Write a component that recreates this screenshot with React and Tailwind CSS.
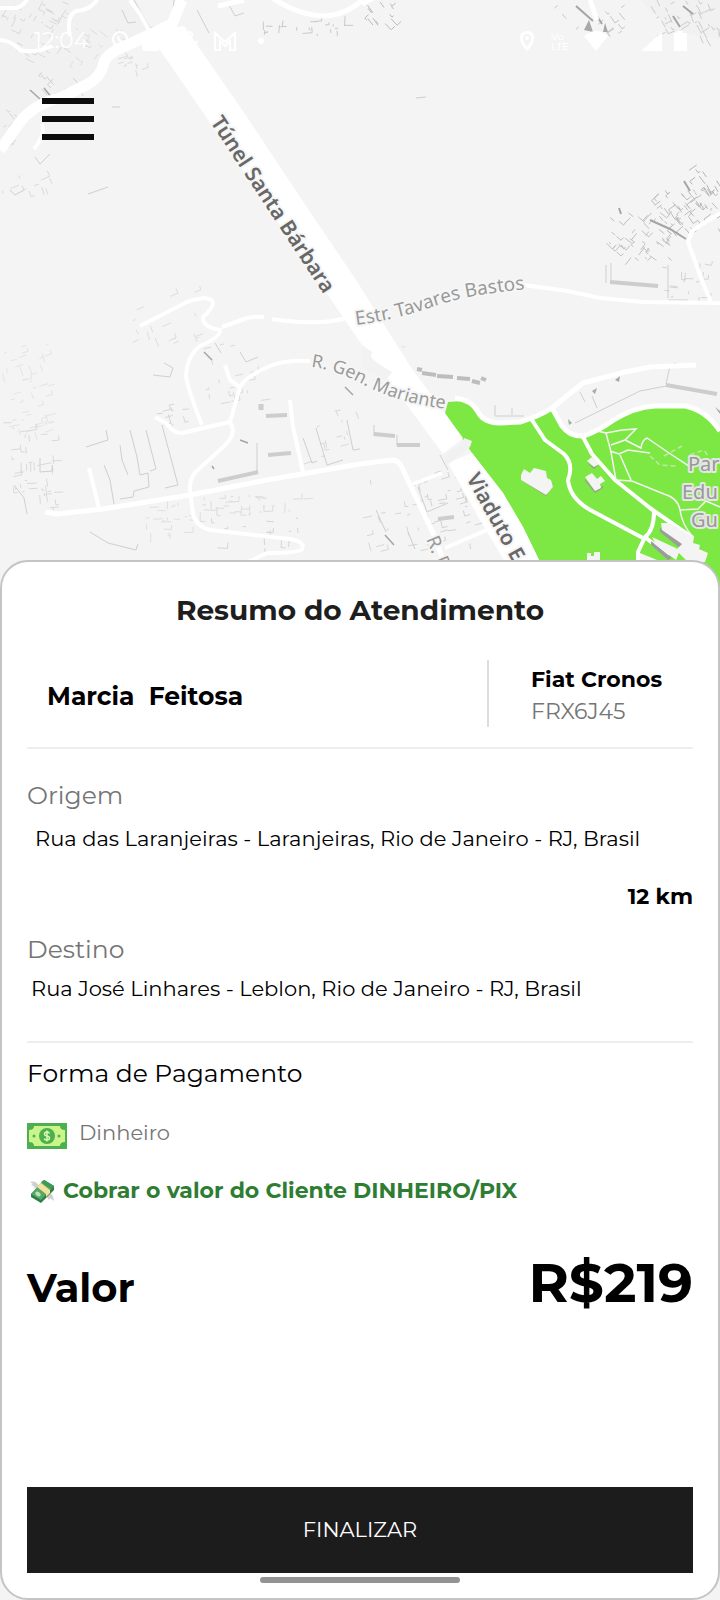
import React from "react";

// Small repeatable random generator, so the buildings stay put between renders
const random = (seed) => {
  let s = seed;
  return () => {
    s = (s * 16807) % 2147483647;
    return s / 2147483647;
  };
};

// Blocks of the map filled with building outlines
const blocks = [
  { seed: 11, x: 0, y: 0, w: 70, h: 62, n: 42, color: "#d9d9d9", tilt: 0.4 },
  { seed: 12, x: 62, y: 20, w: 60, h: 42, n: 16, color: "#dedede", tilt: 0.5 },
  { seed: 13, x: 40, y: 68, w: 40, h: 26, n: 10, color: "#cfcfcf", tilt: 0.8 },
  { seed: 14, x: 2, y: 105, w: 20, h: 45, n: 9, color: "#d6d6d6", tilt: 0.8 },
  { seed: 15, x: 116, y: 52, w: 26, h: 24, n: 11, color: "#dcdcdc", tilt: -0.4 },
  { seed: 16, x: 250, y: 16, w: 100, h: 18, n: 20, color: "#c9c9c9", tilt: -0.1 },
  { seed: 17, x: 362, y: 0, w: 34, h: 26, n: 12, color: "#b9b9b9", tilt: 0.8 },
  { seed: 18, x: 555, y: 0, w: 70, h: 34, n: 14, color: "#c6c6c6", tilt: 0.8 },
  { seed: 19, x: 650, y: 0, w: 70, h: 40, n: 42, color: "#cbcbcb", tilt: 1 },
  { seed: 20, x: 606, y: 212, w: 66, h: 46, n: 52, color: "#c0c0c0", tilt: 0.6 },
  { seed: 21, x: 656, y: 190, w: 64, h: 40, n: 52, color: "#bcbcbc", tilt: 0.8 },
  { seed: 22, x: 690, y: 164, w: 30, h: 40, n: 18, color: "#b4b4b4", tilt: 0.9 },
  { seed: 23, x: 662, y: 262, w: 54, h: 38, n: 18, color: "#d4d4d4", tilt: 0 },
  { seed: 24, x: 0, y: 345, w: 50, h: 90, n: 46, color: "#e4e4e4", tilt: -0.4 },
  { seed: 25, x: 0, y: 420, w: 56, h: 90, n: 44, color: "#dadada", tilt: -0.2 },
  { seed: 26, x: 130, y: 288, w: 66, h: 66, n: 18, color: "#dedede", tilt: -0.5 },
  { seed: 27, x: 192, y: 340, w: 74, h: 70, n: 18, color: "#dadada", tilt: -0.3 },
  { seed: 28, x: 152, y: 400, w: 40, h: 26, n: 10, color: "#d6d6d6", tilt: -0.3 },
  { seed: 29, x: 200, y: 496, w: 108, h: 18, n: 34, color: "#dddddd", tilt: -0.1 },
  { seed: 30, x: 144, y: 500, w: 46, h: 34, n: 20, color: "#e0e0e0", tilt: -0.1 },
  { seed: 31, x: 210, y: 518, w: 96, h: 38, n: 14, color: "#d6d6d6", tilt: -0.1 },
  { seed: 32, x: 310, y: 410, w: 52, h: 54, n: 14, color: "#d9d9d9", tilt: 1.2 },
  { seed: 33, x: 362, y: 480, w: 68, h: 76, n: 26, color: "#d6d6d6", tilt: -0.3 },
  { seed: 34, x: 420, y: 470, w: 56, h: 76, n: 28, color: "#d2d2d2", tilt: -0.3 },
  { seed: 35, x: 362, y: 345, w: 40, h: 34, n: 14, color: "#e2e2e2", tilt: 0.3 },
  { seed: 36, x: 0, y: 172, w: 50, h: 20, n: 10, color: "#dadada", tilt: -0.5 },
];

const scatter = ({ seed, x, y, w, h, n, tilt }) => {
  const rand = random(seed * 7919);
  let d = "";
  for (let i = 0; i < n; i++) {
    const angle = tilt + (rand() > 0.6 ? Math.PI / 2 : 0) + rand() * 0.2;
    const length = 2 + rand() * 8;
    const px = x + rand() * w;
    const py = y + rand() * h;
    const dx = Math.cos(angle) * length;
    const dy = Math.sin(angle) * length;
    d += `M${px.toFixed(1)} ${py.toFixed(1)}l${dx.toFixed(1)} ${dy.toFixed(1)}`;
    if (rand() > 0.7) {
      d += `l${(dy * 0.6).toFixed(1)} ${(-dx * 0.6).toFixed(1)}`;
    }
  }
  return d;
};

const CityMap = () => (
  <svg
    className="absolute inset-0 h-full w-full bg-[#f4f4f4]"
    viewBox="0 0 720 1600"
    preserveAspectRatio="xMidYMin slice"
    fontFamily="'Noto Sans', 'Open Sans', sans-serif"
    aria-hidden="true"
  >
    {/* Built-up areas */}
    <path d="M0 0H130L148 28L108 50L100 75L40 105L0 150Z" fill="#f1f1f1" />
    <path d="M640 0H720V40L670 30Z" fill="#f1f1f1" />

    {blocks.map((block) => (
      <path key={block.seed} d={scatter(block)} stroke={block.color} strokeWidth="1" fill="none" />
    ))}

    <g fill="none" stroke="#cfcfcf" strokeWidth="1">
      <path d="M134 0L150 28L172 22L174 0M197 10L209 33M122 10L128 23L136 22M229 5L235 16L244 13" />
      <path d="M120 445L122 460L128 475M130 430L137 457L140 475L148 473L149 487L134 491L133 497L120 499" />
      <path d="M146 430L156 469L150 471M162 425L178 485L165 488M104 465L110 480L114 504M86 447L108 440L106 430" />
      <path d="M153 375L170 377L173 368L164 363M240 352L246 362L258 357M215 343L221 353M14 485L24 498L27 514M40 458L40 472L53 471L52 465" />
      <path d="M90 532L108 543L136 550L138 544M257 443V473M303 438L312 463L317 461M316 428L327 465L343 460M347 420L353 450L360 449" />
      <path d="M495 405V416H524M512 408V415M580 392L585 402M592 396L597 408M575 423L640 391L666 386M666 384L670 366L676 363" />
      <path d="M418 487L427 512L448 503M440 455L448 470M376 510L386 532M408 532L415 549M606 283V265M611 263V280M668 300H688M668 265V298" />
      <path d="M88 194L108 187M112 107H120M416 98L426 97M10 190L15 195L24 190M35 157L40 164L50 154" />
    </g>
    <g fill="none" stroke="#a5a5a5" strokeWidth="1.5">
      <path d="M30 90L40 99M44 88L52 98M204 352L212 360M248 443L240 440M345 387L353 395M385 535L394 545M212 466L214 469" />
      <path d="M576 6L593 21M597 16L602 24M673 16L680 27M683 6L693 14M650 220L670 229L686 239M684 181L690 191M619 208L621 214" strokeWidth="2" />
    </g>

    {/* Taller buildings seen with their shaded side */}
    <g fill="none" stroke="#cdcdcd" strokeWidth="4">
      <path d="M266 416L287 415M268 455L291 453M218 481L258 472M610 282L658 286M666 385L717 394" />
      <path d="M374 434L395 436M397 445L420 445M438 519L454 517M408 375L416 376" />
      <path d="M417 369L422 370M422 373L436 375M437 376L453 377M457 378L470 379M472 381L480 383M481 378L486 380" stroke="#bdbdbd" />
      <path d="M374 425V436M397 435V446" strokeWidth="1" />
      <path d="M261 404V410" strokeWidth="5" />
    </g>
    <path d="M584 30L589 20L593 32ZM603 32L605 23L608 32ZM568 419L572 423L569 425ZM615 380L620 376L619 382ZM592 391L597 388L595 394ZM715 407L720 411L720 414Z" fill="#a8a8a8" />

    {/* Park */}
    <path
      d="M448 402L463 401L473 407L481 419L493 423L517 423L532 420L552 410L560 423L568 435L582 437L600 427L623 413L653 407H683L703 413L720 430V598H560L540 562L523 527L503 493L472 453L445 413Z"
      fill="#7de843"
    />

    {/* Streets */}
    <g fill="none" stroke="#ffffff" strokeWidth="4" strokeLinejoin="round">
      <path d="M0 150L20 122Q34 104 60 98L88 84Q102 76 104 62Q108 52 130 44L172 24L182 0" strokeWidth="11" />
      <path d="M130 0L140 14L150 32M0 8H16Q24 6 28 -2M0 40Q10 40 20 50Q34 54 52 46M70 36Q66 16 76 11Q92 10 98 -2" />
      <path d="M218 6L244 0M272 -2Q300 16 325 16Q348 14 362 0M362 4L380 -6M590 0L597 20" strokeWidth="5" />
      <path d="M42 124Q46 134 34 149" />
      <path d="M140 326L187 302Q210 294 213 303Q213 308 203 317Q202 327 220 330Q222 336 200 346Q187 356 186 376Q188 390 202 425" />
      <path d="M222 327L247 318Q254 316 264 317M272 319Q320 326 346 318" />
      <path d="M310 361Q284 360 270 366Q246 376 240 387L230 422Q238 434 223 447L200 468Q189 476 190 490L193 514Q196 526 210 530L290 539Q306 542 302 549Q300 553 267 553L248 562" />
      <path d="M225 365L230 380L240 387M155 417L166 423Q174 434 182 433L230 422" />
      <path d="M45 512L57 514L103 509L190 495L267 480L360 464L392 460Q400 460 404 472L433 533L444 562" strokeWidth="5" />
      <path d="M89 468L99 508M290 400L293 427L303 472M413 484L442 473M445 548L487 530" />
      <path d="M524 285L567 291L600 298L643 302L720 303M720 213L692 231L688 242L703 283L711 302" />
      <path d="M455 398Q472 400 478 412Q484 423 500 423L520 422Q540 416 552 408L583 383L625 372L650 367L696 365" strokeWidth="5" />
      <path d="M552 408L562 426Q570 437 584 436Q600 430 612 421Q634 407 655 406H685Q706 410 720 431" strokeWidth="5" />
      <path d="M532 420L545 440L564 454Q574 464 568 480Q570 500 594 512L643 538" />
      <path d="M583 437L592 454L615 480L650 508L693 538M654 512Q654 530 645 537L638 552V562M645 537L668 556" />
    </g>
    <g fill="none" stroke="#f4f4f4" strokeWidth="1.5">
      <path d="M597 431L606 433L611 452L616 480M606 433L622 430L636 429L625 440L611 445M610 451L619 454L628 450L650 453" />
      <path d="M625 440L641 448Q642 440 647 438L672 455L692 468M620 455L631 480M615 480L632 481L664 494Q678 498 680 510Q682 525 693 537" />
      <path d="M680 510L698 509L706 501L720 507" />
      <path d="M690 463L697 460M650 456L660 465L676 466M664 456L682 446M690 455L704 450L708 456" strokeDasharray="5 3" stroke="#bdeaa0" />
    </g>

    {/* Tunnel and viaduct */}
    <path d="M146 32L184 26L247 117L300 197L358 283L410 366L463 438L443 454L413 413L360 342L213 127L160 50Z" fill="#ffffff" />
    <path d="M448 463L472 453L503 493L523 527L540 562H505L480 520Z" fill="#ffffff" />
    <path d="M443 456L462 444L464 438L472 441L470 447L446 466Z" fill="#f1f1f1" />
    <path d="M362 345L372 352L370 358L382 366L392 372L386 380L362 366Z" fill="#f2f2f2" />

    {/* Park buildings */}
    <g fill="#9c9c9c">
      <path d="M521 477L546 493L553 488V484L546 496L521 480Z" />
      <path d="M585 479L595 491L603 486V488L595 493L585 481Z M587 463L594 469L599 465L594 467Z" />
      <path d="M660 528L680 542L692 553L680 548L660 532ZM651 541L672 558L668 560L651 545Z" />
    </g>
    <g fill="#f4f4f4">
      <path d="M521 475L524 469L530 473L534 468L546 471L547 478L551 480L553 487L546 495L536 489L521 480Z" />
      <path d="M587 461L592 457L599 464L594 467ZM585 477L592 473L597 479L601 476L605 481L600 484L601 488L595 491Z" />
      <path d="M587 553H591V556H594V552H600V562H587ZM661 523L670 523L686 533L694 537L693 543L700 545L699 549L708 553L705 562H688L676 550L682 544L662 530Z" />
      <path d="M652 537L680 550L676 560L656 545ZM640 553L662 562H640Z" />
    </g>

    {/* Street names */}
    <defs>
      <path id="tunel" d="M210 122L336 313" />
      <path id="estrada" d="M356 325Q396 320 432 307T530 289" />
      <path id="mariante" d="M311 367Q336 370 362 384Q402 405 456 410" />
      <path id="viaduto" d="M466 478L528 590" />
      <path id="rua" d="M426 539L448 592" />
    </defs>
    <g paintOrder="stroke" strokeLinejoin="round" strokeWidth="4" stroke="#f6f6f6">
      <g fill="#686868" fontWeight="600">
        <text fontSize="21">
          <textPath href="#tunel">Túnel Santa Bárbara</textPath>
        </text>
        <text fontSize="21">
          <textPath href="#viaduto">Viaduto E</textPath>
        </text>
      </g>
      <g fill="#9a9a9a">
        <text fontSize="19">
          <textPath href="#estrada">Estr. Tavares Bastos</textPath>
        </text>
        <text fontSize="18">
          <textPath href="#mariante">R. Gen. Mariante</textPath>
        </text>
        <text fontSize="19">
          <textPath href="#rua">R. P</textPath>
        </text>
      </g>
      <g fill="#989898" stroke="#e6e6e6" fontSize="20">
        <text x="688" y="471">Par</text>
        <text x="682" y="499">Edu</text>
        <text x="691" y="527">Gu</text>
      </g>
    </g>
  </svg>
);

const StatusBar = () => (
  <div className="flex h-[82px] items-center justify-between pl-[34px] pr-[33px] text-white">
    <div className="flex items-center">
      <span className="w-[74px] text-[22px] leading-6">12:04</span>
      <svg className="h-6 w-[160px]" viewBox="0 0 160 24" fill="none" stroke="currentColor" strokeWidth="2">
        <circle cx="12" cy="10" r="7" />
        <path d="M7 15L5 21L12 18M10 7Q10 12 15 13" />
        <path d="M36 21H50Q54 15 47 13Q43 7 38 12Q33 14 36 21Z" fill="currentColor" />
        <path d="M89 20L78 8Q77 3 82 3Q87 5 82 9Q74 14 77 18Q84 23 89 12" />
        <path d="M107 21V4L117 13L127 4V21H122V12L117 17L112 12V21Z" />
        <circle cx="153" cy="12" r="3" fill="currentColor" stroke="none" />
      </svg>
    </div>
    <svg className="h-6 w-[170px]" viewBox="0 0 170 24" fill="currentColor">
      <path fillRule="evenodd" d="M10 2Q17 2 17 9Q17 15 10 22Q3 15 3 9Q3 2 10 2ZM10 5Q6 5 6 9Q6 13 10 18Q14 13 14 9Q14 5 10 5Z" />
      <circle cx="10" cy="9" r="2" />
      <text x="34" y="11" fontSize="10" fontWeight="500">Vo</text>
      <text x="34" y="21" fontSize="10" fontWeight="500">LTE</text>
      <path d="M67 7Q79 -3 91 7L79 22Z" />
      <path d="M124 22L145 3V22Z" />
      <path d="M157 4H160V2H166V4H170V22H157Z" />
    </svg>
  </div>
);

const BankNote = () => (
  <svg className="h-[26px] w-10" viewBox="0 0 40 26" aria-hidden="true">
    <rect width="40" height="26" fill="#4caf50" />
    <path d="M7 3H33Q33 7 38 7V19Q33 19 33 23H7Q7 19 2 19V7Q7 7 7 3Z" fill="#cbf58a" />
    <circle cx="20" cy="13" r="8" fill="#4caf50" />
    <circle cx="7" cy="13" r="1.5" fill="#4caf50" />
    <circle cx="32" cy="13" r="1.5" fill="#4caf50" />
    <path
      d="M22.5 10.5Q22 9 20 9Q17.5 9 17.5 11Q17.5 12.5 20 13Q22.5 13.5 22.5 15Q22.5 17 20 17Q17.5 17 17.5 15.5M20 7.5V18.5"
      fill="none"
      stroke="#dcf9ac"
      strokeWidth="1.5"
    />
  </svg>
);

const FlyingMoney = () => (
  <svg className="h-[26px] w-7" viewBox="0 0 28 26" aria-hidden="true">
    <path d="M12 8Q9 2 3 4L6 6L4 7L8 9L6 11L11 9ZM20 14Q26 14 27 23L23 20L22 22L19 18L16 19Z" fill="#cfcfcf" />
    <path d="M4 16L17 2L27 8V12L14 25L4 19Z" fill="#2e7d46" />
    <path d="M4 16L17 2L27 8L14 22Z" fill="#55a868" />
    <path d="M14 4L17 2L27 8L24 11Z" fill="#3f9a55" />
    <path d="M10 9L14 5L23 12V15L19 19V16Z" fill="#f5e29a" />
    <ellipse cx="11" cy="16" rx="3" ry="2" transform="rotate(35 11 16)" fill="#b9e0b5" />
  </svg>
);

const Place = ({ label, address, className }) => (
  <div>
    <h2 className="text-[25px] leading-9 text-[#757575]">{label}</h2>
    <p className={`text-[21px] leading-8 ${className}`}>{address}</p>
  </div>
);

const App = () => {
  return (
    <div className="relative flex min-h-screen flex-col font-['Montserrat','Inter',sans-serif] text-black">
      <CityMap />

      <header className="relative h-[560px]">
        <StatusBar />
        <button type="button" aria-label="Menu" className="ml-[42px] mt-4 flex w-[52px] flex-col gap-3">
          <span className="h-[6px] w-full bg-[#0c0c0c]" />
          <span className="h-[6px] w-full bg-[#0c0c0c]" />
          <span className="h-[6px] w-full bg-[#0c0c0c]" />
        </button>
      </header>

      <main className="relative flex grow flex-col rounded-[28px] border-2 border-[#c4c4c4] bg-white px-[25px] pb-[15px] pt-7">
        <h1 className="text-center text-[28px] font-bold leading-10 text-[#1e1e1e]">
          Resumo do Atendimento
        </h1>

        <section className="mt-[30px] flex border-b-2 border-[#eeeeee] pb-5">
          <p className="grow self-center whitespace-pre pl-5 pt-1 text-[25px] font-bold leading-9">
            {"Marcia  Feitosa"}
          </p>
          <div className="flex h-[67px] w-[206px] flex-col justify-center border-l-2 border-[#dddddd] pl-[42px] pt-1">
            <p className="text-[22px] font-bold leading-8">Fiat Cronos</p>
            <p className="text-[22px] leading-8 text-[#757575]">FRX6J45</p>
          </div>
        </section>

        <section className="border-b-2 border-[#eeeeee] pb-9 pt-7">
          <Place
            label="Origem"
            address="Rua das Laranjeiras - Laranjeiras, Rio de Janeiro - RJ, Brasil"
            className="mt-[10px] pl-2"
          />
          <p className="mt-[26px] text-right text-[22px] font-bold leading-8">12 km</p>
          <div className="mt-[18px]">
            <Place
              label="Destino"
              address="Rua José Linhares - Leblon, Rio de Janeiro - RJ, Brasil"
              className="mt-[6px] pl-1"
            />
          </div>
        </section>

        <section className="pt-3">
          <h2 className="text-[25px] leading-9">Forma de Pagamento</h2>
          <div className="mt-[26px] flex items-end gap-3">
            <BankNote />
            <p className="text-[21px] leading-8 text-[#757575]">Dinheiro</p>
          </div>
          <div className="mt-[26px] flex items-center gap-2 text-[#2e7d32]">
            <FlyingMoney />
            <p className="text-[22px] font-bold leading-8">Cobrar o valor do Cliente DINHEIRO/PIX</p>
          </div>
        </section>

        <section className="mt-11 flex items-baseline justify-between">
          <h2 className="text-[40px] font-bold leading-[48px]">Valor</h2>
          <p className="text-[55px] font-bold leading-[64px]">R$219</p>
        </section>

        <button type="button" className="mt-auto h-[86px] w-full bg-[#1c1c1c] text-[21px] text-white">
          FINALIZAR
        </button>
        <div className="mt-1 h-[6px] w-[200px] self-center rounded-full bg-[#939393]" />
      </main>
    </div>
  );
};

export default App;
